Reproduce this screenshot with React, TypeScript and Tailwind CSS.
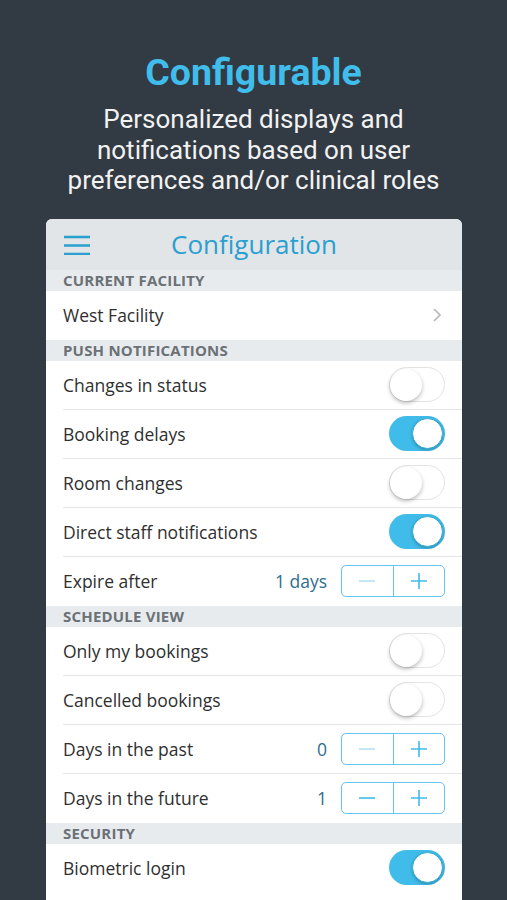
import React from 'react';

type Row =
  | { kind: 'link'; label: string }
  | { kind: 'toggle'; label: string; on: boolean }
  | { kind: 'stepper'; label: string; value: string; minusOff?: boolean };

const sections: { title: string; rows: Row[] }[] = [
  { title: 'Current Facility', rows: [{ kind: 'link', label: 'West Facility' }] },
  {
    title: 'Push Notifications',
    rows: [
      { kind: 'toggle', label: 'Changes in status', on: false },
      { kind: 'toggle', label: 'Booking delays', on: true },
      { kind: 'toggle', label: 'Room changes', on: false },
      { kind: 'toggle', label: 'Direct staff notifications', on: true },
      { kind: 'stepper', label: 'Expire after', value: '1 days', minusOff: true },
    ],
  },
  {
    title: 'Schedule View',
    rows: [
      { kind: 'toggle', label: 'Only my bookings', on: false },
      { kind: 'toggle', label: 'Cancelled bookings', on: false },
      { kind: 'stepper', label: 'Days in the past', value: '0', minusOff: true },
      { kind: 'stepper', label: 'Days in the future', value: '1' },
    ],
  },
  { title: 'Security', rows: [{ kind: 'toggle', label: 'Biometric login', on: true }] },
];

const Toggle = ({ on }: { on: boolean }) =>
  on ? (
    <div className="flex h-[35px] w-[56px] items-center justify-end rounded-full bg-[#3fbce9] pr-[2px]">
      <div className="h-[31px] w-[31px] rounded-full border border-[#35a9d6] bg-white shadow-[0_1px_3px_rgba(0,0,0,0.25)]" />
    </div>
  ) : (
    <div className="flex h-[35px] w-[56px] items-center rounded-full border-[1.5px] border-[#e3e3e3] bg-white">
      <div className="h-[32px] w-[32px] rounded-full bg-white shadow-[0_2px_4px_rgba(0,0,0,0.28)]" />
    </div>
  );

const Stepper = ({ minusOff }: { minusOff?: boolean }) => (
  <div className="flex h-[32px] w-[104px] rounded-[5px] border-[1.5px] border-[#62c6ee]">
    <div className="flex flex-1 items-center justify-center border-r-[1.5px] border-[#62c6ee]">
      <svg width="18" height="18" viewBox="0 0 18 18">
        <path d="M1 9h16" stroke={minusOff ? '#b5e2f5' : '#3fbce9'} strokeWidth="1.6" />
      </svg>
    </div>
    <div className="flex flex-1 items-center justify-center">
      <svg width="18" height="18" viewBox="0 0 18 18">
        <path d="M1 9h16M9 1v16" stroke="#3fbce9" strokeWidth="1.6" />
      </svg>
    </div>
  </div>
);

export default function App() {
  return (
    <div className="h-[900px] overflow-hidden bg-[#323b43]">
      {/* Promo heading */}
      <div className="pt-[50px] text-center font-['Roboto',sans-serif]">
        <h1 className="text-[37.5px] font-bold leading-[44px] text-[#40bdea]">Configurable</h1>
        <p className="mt-[10px] text-[26px] leading-[30.5px] text-[#f2f2f2]">
          Personalized displays and
          <br />
          notifications based on user
          <br />
          preferences and/or clinical roles
        </p>
      </div>

      {/* Phone screen card */}
      <div className="ml-[46px] mt-[23px] w-[416px] overflow-hidden rounded-t-[6px] bg-white pb-[20px] font-['Open_Sans',sans-serif]">
        <div className="relative flex h-[51px] items-center justify-center bg-[#e1e5e8]">
          <svg className="absolute left-[18px] top-[16px]" width="26" height="20" viewBox="0 0 26 20">
            <path d="M0 2h26M0 10.5h26M0 19h26" stroke="#2b9fd0" strokeWidth="2.6" />
          </svg>
          <span className="text-[26px] leading-none text-[#2a9fd0]">Configuration</span>
        </div>

        {sections.map((section) => (
          <div key={section.title}>
            <div className="flex h-[21px] items-center bg-[#e8ebee] pl-[17px] text-[15px] font-bold uppercase tracking-[0.2px] text-[#6b7176]">
              {section.title}
            </div>
            {section.rows.map((row, i) => (
              <div key={row.label} className="pl-[17px]">
                <div
                  className={
                    'flex h-[49px] items-center justify-between pr-[17px] ' +
                    (i < section.rows.length - 1 ? 'border-b border-[#e6e6e6]' : 'border-b border-white')
                  }
                >
                  <span className="pt-[2px] text-[17.5px] text-[#2f2f2f]">{row.label}</span>
                  {row.kind === 'link' && (
                    <svg className="mr-[4px]" width="8" height="14" viewBox="0 0 8 14">
                      <path d="M1 1l6 6-6 6" fill="none" stroke="#b8b8b8" strokeWidth="1.6" />
                    </svg>
                  )}
                  {row.kind === 'toggle' && <Toggle on={row.on} />}
                  {row.kind === 'stepper' && (
                    <div className="flex items-center gap-[14px]">
                      <span className="pt-[2px] text-[17.5px] text-[#2d6e8c]">{row.value}</span>
                      <Stepper minusOff={row.minusOff} />
                    </div>
                  )}
                </div>
              </div>
            ))}
          </div>
        ))}
      </div>
    </div>
  );
}
